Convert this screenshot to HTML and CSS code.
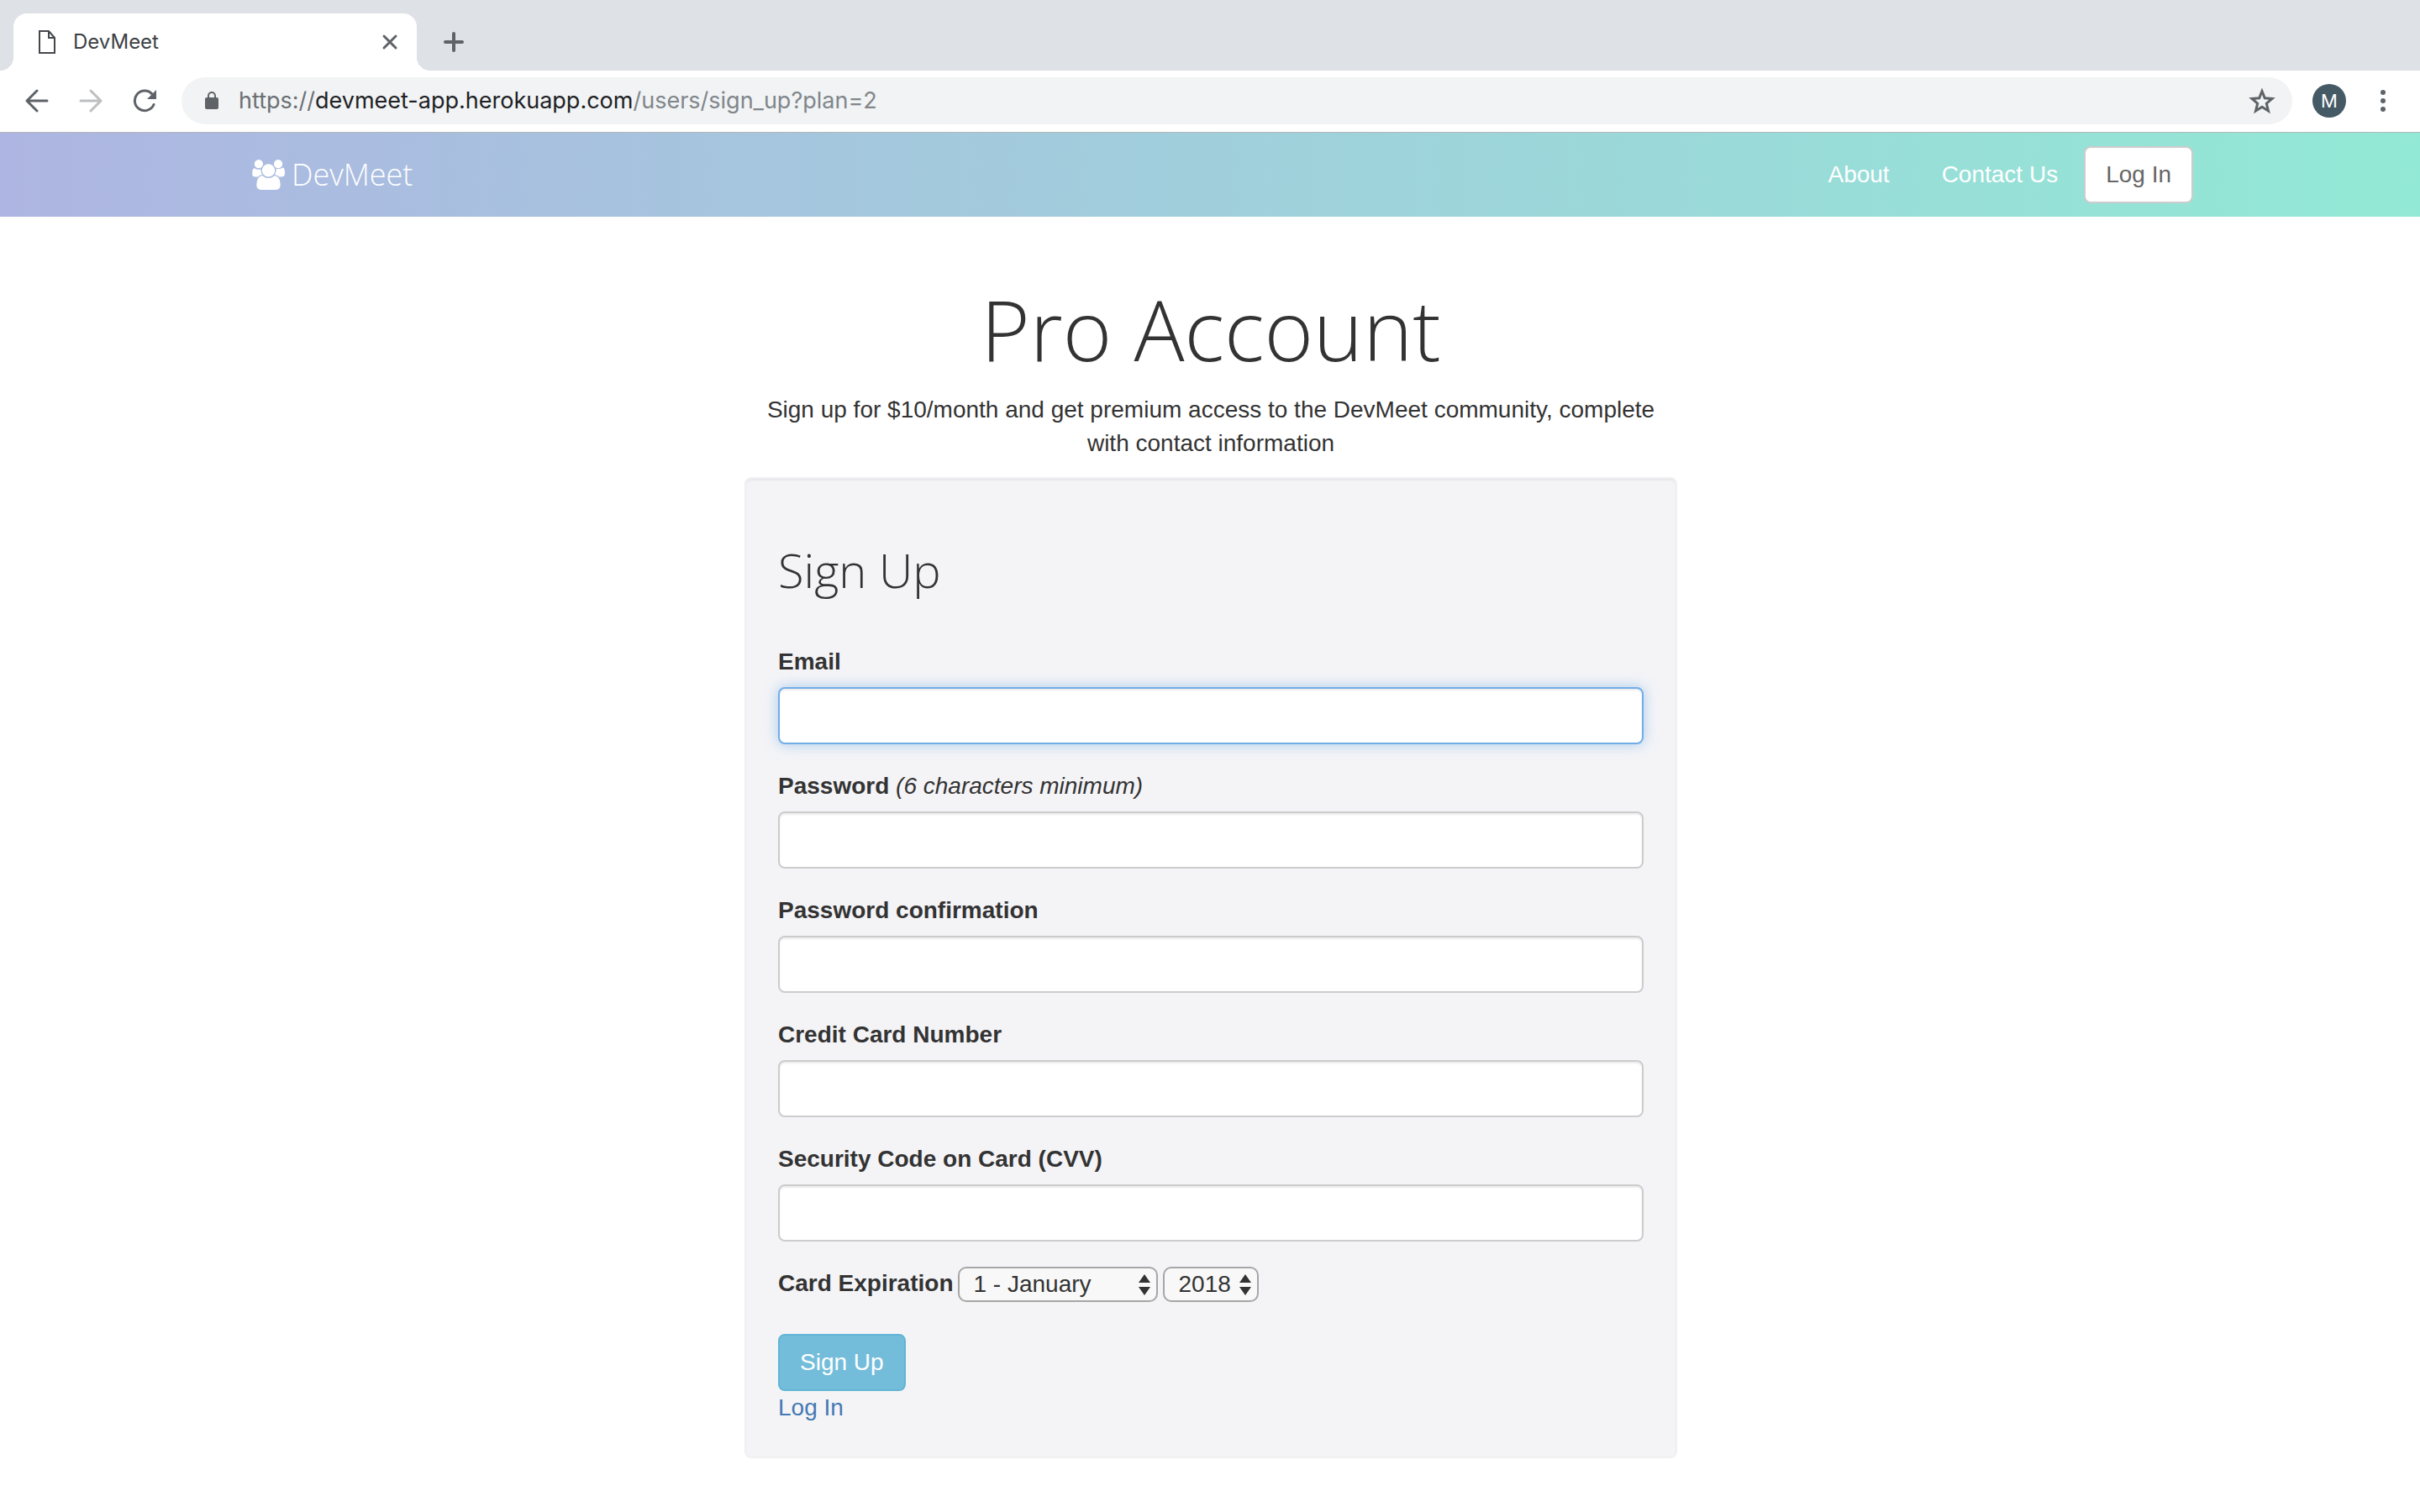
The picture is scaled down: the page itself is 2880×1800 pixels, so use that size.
FILE: index.html
```html
<!DOCTYPE html>
<html lang="en">
<head>
<meta charset="utf-8">
<title>DevMeet</title>
<link rel="stylesheet" href="styles.css">
</head>
<body>
<div class="browser">
  <div class="tabstrip">
    <div class="tab">
      <svg class="tab-icon" width="22" height="30" viewBox="0 0 22 30" fill="none" stroke="#45484b" stroke-width="2"><path d="M2 2h11l7 8v18H2zM13 2v8h7"/></svg>
      <span class="tab-title">DevMeet</span>
      <button class="icon-button" aria-label="Close tab"><svg width="20" height="20" viewBox="0 0 20 20" stroke="#5f6368" stroke-width="3" stroke-linecap="round"><path d="M3 3l14 14M17 3L3 17"/></svg></button>
    </div>
    <button class="icon-button new-tab" aria-label="New tab"><svg width="24" height="24" viewBox="0 0 24 24" stroke="#5f6368" stroke-width="4" stroke-linecap="round"><path d="M12 2v20M2 12h20"/></svg></button>
  </div>
  <div class="toolbar">
    <div class="history">
      <button class="icon-button" aria-label="Back"><svg width="28" height="28" viewBox="0 0 28 28" fill="none" stroke="#5f6368" stroke-width="3" stroke-linecap="round" stroke-linejoin="round"><path d="M26 14H3M14 2L2 14l12 12"/></svg></button>
      <button class="icon-button" aria-label="Forward"><svg width="28" height="28" viewBox="0 0 28 28" fill="none" stroke="#bdbfc1" stroke-width="3" stroke-linecap="round" stroke-linejoin="round"><path d="M2 14h23M14 2l12 12-12 12"/></svg></button>
      <button class="icon-button" aria-label="Reload"><svg width="28" height="28" viewBox="0 0 28 28"><path d="M25 18.500A11.800 11.800 0 1 1 23 6" fill="none" stroke="#5f6368" stroke-width="3" stroke-linecap="round"/><path d="M28 1v11H17z" fill="#5f6368"/></svg></button>
    </div>
    <div class="omnibox">
      <svg width="16" height="24" viewBox="0 0 16 24"><path d="M4 9V6a4 4 0 0 1 8 0v3" fill="none" stroke="#5f6368" stroke-width="2"/><rect y="8" width="16" height="14" rx="2" fill="#5f6368"/></svg>
      <span class="url"><span class="scheme">https://</span><span class="host">devmeet-app.herokuapp.com</span>/users/sign_up?plan=2</span>
      <button class="icon-button" aria-label="Bookmark this page"><svg width="32" height="32" viewBox="0 0 32 32" fill="none" stroke="#5f6368" stroke-width="3"><path d="M16 4.500l3.300 8.300 8.700.7-6.700 5.700 2.200 8.800L16 23.300 8.500 28l2.200-8.800L4 13.500l8.700-.7z"/></svg></button>
    </div>
    <button class="avatar" aria-label="Profile">M</button>
    <button class="icon-button" aria-label="Menu"><svg width="8" height="28" viewBox="0 0 8 28" fill="#5f6368"><circle cx="4" cy="4" r="3"/><circle cx="4" cy="14" r="3"/><circle cx="4" cy="24" r="3"/></svg></button>
  </div>
</div>
<nav class="navbar">
  <div class="container">
    <a class="brand" href="#"><svg width="39" height="36" viewBox="0 0 1920 1792" fill="#fff"><path d="M593 896q-162 5-265 128h-134q-82 0-138-40.500t-56-118.500q0-353 124-353 6 0 43.500 21t97.500 42.500 119 21.500q67 0 133-23-5 37-5 66 0 159 93 293zm1071 637q0 120-73 189.500t-194 69.500h-874q-121 0-194-69.500t-73-189.500q0-53 3.500-103.500t14-109 26.500-108.500 43-97.500 62-81 85.500-53.500 111.500-20q10 0 43 21.500t73 48 107 48 135 21.500 135-21.500 107-48 73-48 43-21.500q61 0 111.500 20t85.500 53.500 62 81 43 97.500 26.500 108.500 14 109 3.500 103.500zm-1024-1277q0 106-75 181t-181 75-181-75-75-181 75-181 181-75 181 75 75 181zm704 384q0 159-112.500 271.500t-271.500 112.500-271.500-112.500-112.500-271.500 112.500-271.500 271.500-112.500 271.500 112.500 112.500 271.500zm576 225q0 78-56 118.500t-138 40.500h-134q-103-123-265-128 93-134 93-293 0-29-5-66 66 23 133 23 59 0 119-21.500t97.500-42.500 43.500-21q124 0 124 353zm-128-609q0 106-75 181t-181 75-181-75-75-181 75-181 181-75 181 75 75 181z"/></svg>DevMeet</a>
    <div class="nav-links">
      <a class="nav-link" href="#">About</a>
      <a class="nav-link" href="#">Contact Us</a>
      <a class="btn btn-default" href="#">Log In</a>
    </div>
  </div>
</nav>
<main class="column">
  <h1>Pro Account</h1>
  <p class="lead">Sign up for $10/month and get premium access to the DevMeet community, complete with contact information</p>
  <form class="well">
    <h2>Sign Up</h2>
    <div class="form-group"><label for="email">Email</label><input class="form-control is-active" id="email" type="email"></div>
    <div class="form-group"><div class="label-row"><label for="password">Password</label> <em>(6 characters minimum)</em></div><input class="form-control" id="password" type="password"></div>
    <div class="form-group"><label for="confirmation">Password confirmation</label><input class="form-control" id="confirmation" type="password"></div>
    <div class="form-group"><label for="card">Credit Card Number</label><input class="form-control" id="card" type="text"></div>
    <div class="form-group"><label for="cvv">Security Code on Card (CVV)</label><input class="form-control" id="cvv" type="text"></div>
    <div class="expiration">
      <label for="month">Card Expiration</label>
      <span class="picker picker-month"><select id="month"><option>1 - January</option><option>2 - February</option><option>3 - March</option></select><svg class="arrows" width="14" height="26" viewBox="0 0 14 26" fill="#333"><path d="M7 0l7 10H0zM0 15h14L7 25z"/></svg></span>
      <span class="picker picker-year"><select aria-label="Expiration year"><option>2018</option><option>2019</option><option>2020</option></select><svg class="arrows" width="14" height="26" viewBox="0 0 14 26" fill="#333"><path d="M7 0l7 10H0zM0 15h14L7 25z"/></svg></span>
    </div>
    <button class="btn btn-primary" type="submit">Sign Up</button>
    <a class="login" href="#">Log In</a>
  </form>
</main>
</body>
</html>
```
FILE: styles.css
```css
* { box-sizing: border-box; }
body {
  margin: 0;
  background: #fff;
  color: #333;
  font: 28px/40px "Liberation Sans", Arial, sans-serif;
}
a { text-decoration: none; }
svg { display: block; flex: none; }
button, input, select { font: inherit; }

/* Browser frame */
.browser { font-family: Inter, Roboto, sans-serif; }
.icon-button { display: flex; padding: 0; border: 0; background: none; }
.tabstrip {
  display: flex;
  align-items: center;
  height: 84px;
  padding: 16px 16px 0;
  background: #dee1e6;
}
.tab {
  position: relative;
  display: flex;
  align-items: center;
  width: 480px;
  height: 68px;
  padding: 0 22px 0 29px;
  border-radius: 16px 16px 0 0;
  background: #fff;
}
.tab::before, .tab::after {
  content: "";
  position: absolute;
  bottom: 0;
  width: 16px;
  height: 16px;
}
.tab::before { right: 100%; background: radial-gradient(circle at 0 0, transparent 16px, #fff 16px); }
.tab::after { left: 100%; background: radial-gradient(circle at 100% 0, transparent 16px, #fff 16px); }
.tab-title {
  flex: 1;
  margin-left: 20px;
  color: #3c4043;
  font-size: 24px;
}
.new-tab { margin-left: 32px; }
.toolbar {
  display: flex;
  align-items: center;
  height: 74px;
  padding: 8px 40px 9px 30px;
  border-bottom: 1px solid #b5b6b8;
}
.history { display: flex; gap: 36px; }
.omnibox {
  display: flex;
  flex: 1;
  align-items: center;
  height: 56px;
  margin: 0 24px 0 30px;
  padding: 0 20px 0 28px;
  border-radius: 28px;
  background: #f1f3f4;
}
.url {
  flex: 1;
  margin-left: 24px;
  color: #80868b;
  font-size: 27px;
}
.scheme { color: #6b6f74; }
.host { color: #202124; }
.avatar {
  width: 40px;
  height: 40px;
  margin-right: 40px;
  padding: 0;
  border: 0;
  border-radius: 50%;
  background: #455a64;
  color: #fff;
  font-size: 22px;
  text-align: center;
}

/* Site navigation */
.navbar {
  height: 100px;
  background: linear-gradient(90deg, #aeb5e2, #92e9d5);
}
.container {
  display: flex;
  align-items: center;
  justify-content: space-between;
  max-width: 2340px;
  height: 100%;
  margin: 0 auto;
  padding-left: 30px;
}
.brand {
  display: flex;
  align-items: center;
  gap: 8px;
  color: #fff;
  font: 300 36px/40px "Open Sans", sans-serif;
}
.nav-links { display: flex; align-items: center; }
.nav-link { padding: 30px 31px; color: #fff; }
.btn {
  display: inline-block;
  padding: 12px 24px;
  border: 2px solid;
  border-radius: 8px;
}
.btn-default { border-color: #ccc; background: #fff; color: #666; }
.btn-primary { border-color: #62b5d4; background: #73bddb; color: #fff; }

/* Sign-up column */
.column {
  max-width: 1112px;
  margin: 0 auto;
  padding: 80px 0 0 2px;
}
h1, h2 { margin: 0; font-family: "Open Sans", sans-serif; font-weight: 300; }
h1 { margin-bottom: 24px; font-size: 100px; line-height: 106px; text-align: center; }
h2 { margin: 40px 0 60px; font-size: 56px; line-height: 60px; }
.lead { margin: 0 0 20px; text-align: center; }
.well {
  display: flow-root;
  padding: 38px;
  border: 2px solid #f0f0f2;
  border-radius: 8px;
  background: #f4f4f7;
  box-shadow: inset 0 2px 2px rgba(0, 0, 0, .05);
}
label { font-weight: bold; }
.form-group { display: flex; flex-direction: column; gap: 10px; margin-bottom: 30px; }
.form-control {
  width: 100%;
  height: 68px;
  padding: 12px 24px;
  border: 2px solid #ccc;
  border-radius: 8px;
  background: #fff;
  box-shadow: inset 0 2px 2px rgba(0, 0, 0, .08);
}
.is-active {
  border-color: #72ade6;
  box-shadow: inset 0 2px 2px rgba(0, 0, 0, .08), 0 0 16px rgba(114, 173, 230, .6);
}
.expiration { display: flex; gap: 6px; height: 42px; margin-bottom: 38px; }
.picker { position: relative; }
.picker-month { width: 238px; }
.picker-year { width: 114px; }
select {
  width: 100%;
  height: 42px;
  padding: 0 16px;
  border: 2px solid #a6a6a6;
  border-radius: 10px;
  background: #f8f8f8;
  color: #333;
  line-height: 36px;
  appearance: none;
}
.arrows { position: absolute; top: 9px; right: 9px; pointer-events: none; }
.login { display: block; color: #4479b3; }
.well .btn { display: block; }
```
